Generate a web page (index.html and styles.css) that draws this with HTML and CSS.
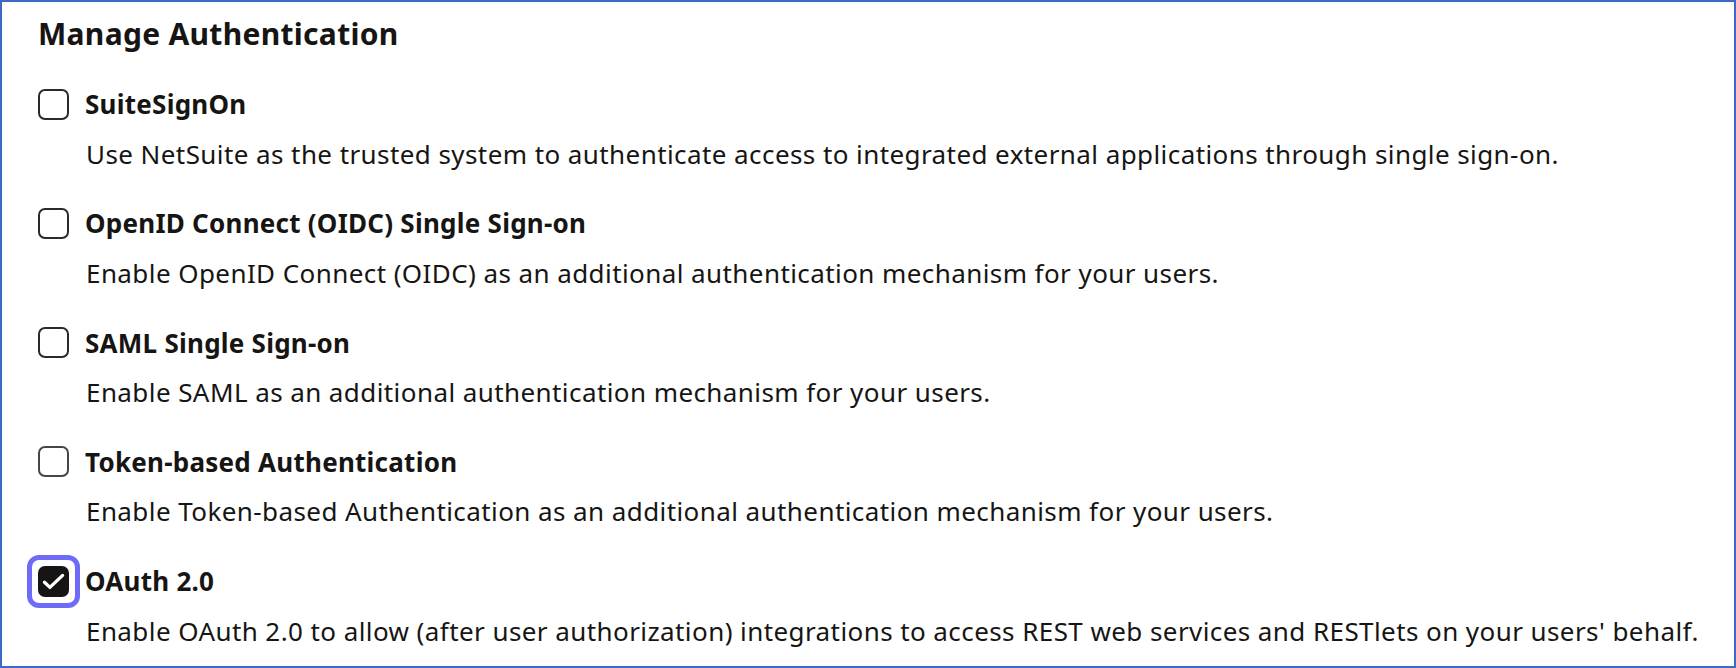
FILE: index.html
```html
<!DOCTYPE html>
<html lang="en">
  <head>
    <meta charset="UTF-8" />
    <meta name="viewport" content="width=device-width, initial-scale=1.0" />
    <title>Manage Authentication</title>
    <link rel="stylesheet" href="styles.css">
  </head>
  <body>
    <main class="panel">
      <h1>Manage Authentication</h1>
      <div class="options">
        <div class="option">
          <label class="option-label">
            <span class="box"></span>
            SuiteSignOn
          </label>
          <p>Use NetSuite as the trusted system to authenticate access to integrated external applications through single sign-on.</p>
        </div>
        <div class="option">
          <label class="option-label">
            <span class="box"></span>
            OpenID Connect (OIDC) Single Sign-on
          </label>
          <p>Enable OpenID Connect (OIDC) as an additional authentication mechanism for your users.</p>
        </div>
        <div class="option">
          <label class="option-label">
            <span class="box"></span>
            SAML Single Sign-on
          </label>
          <p>Enable SAML as an additional authentication mechanism for your users.</p>
        </div>
        <div class="option">
          <label class="option-label">
            <span class="box hover"></span>
            Token-based Authentication
          </label>
          <p>Enable Token-based Authentication as an additional authentication mechanism for your users.</p>
        </div>
        <div class="option">
          <label class="option-label">
            <span class="box checked">
              <svg viewBox="0 0 31 31" width="31" height="31">
                <path d="M6.5 16.2l5.4 5.2L24.6 9.4" fill="none" stroke="#fff" stroke-width="3.3" stroke-linecap="round" stroke-linejoin="round" />
              </svg>
            </span>
            OAuth 2.0
          </label>
          <p>Enable OAuth 2.0 to allow (after user authorization) integrations to access REST web services and RESTlets on your users' behalf.</p>
        </div>
      </div>
    </main>
  </body>
</html>
```

FILE: styles.css
```css
html, body {
  margin: 0;
  padding: 0;
  background: #fff;
}
body {
  font-family: "Noto Sans", "Open Sans", sans-serif;
  color: #161513;
}
.panel {
  box-sizing: border-box;
  width: 1736px;
  height: 668px;
  border: 2px solid #3b6bc6;
  padding: 13px 10px 0 36px;
}
h1 {
  margin: 0;
  font-size: 30px;
  line-height: 38px;
  font-weight: 700;
  letter-spacing: 0.3px;
}
.options {
  display: flex;
  flex-direction: column;
  gap: 37.8px;
  margin-top: 35px;
}
.option-label {
  display: flex;
  align-items: center;
  gap: 16px;
  height: 32px;
  font-size: 26px;
  font-weight: 700;
  line-height: 32px;
  letter-spacing: 0.25px;
}
.box {
  position: relative;
  box-sizing: border-box;
  width: 31px;
  height: 31px;
  border: 2px solid #2b2a28;
  border-radius: 7px;
  flex-shrink: 0;
}
.box.hover {
  border-color: #474643;
}
.box.checked {
  background: #161513;
  border-color: #161513;
}
.box.checked svg {
  position: absolute;
  top: -2px;
  left: -2px;
}
/* focus ring */
.box.checked::after {
  content: "";
  position: absolute;
  top: -13px;
  left: -13px;
  right: -13px;
  bottom: -13px;
  border: 5px solid #6e6bf7;
  border-radius: 12px;
}
.option p {
  margin: 17.5px 0 0 48px;
  font-size: 26px;
  line-height: 32px;
  letter-spacing: 0.42px;
  white-space: nowrap;
}
```
